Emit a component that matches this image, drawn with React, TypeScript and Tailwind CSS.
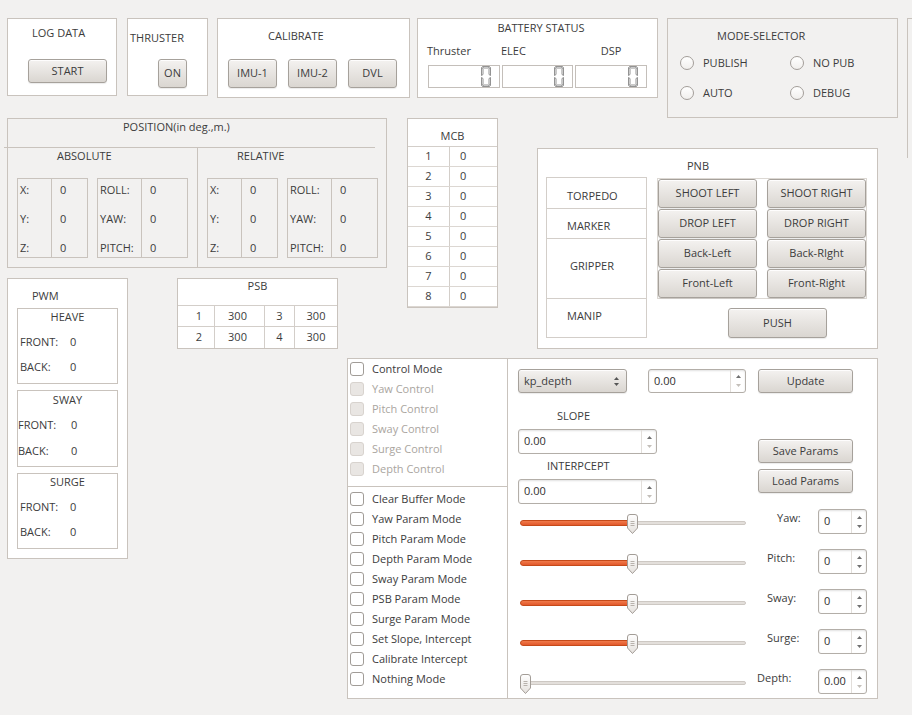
import React from "react";

const Btn = ({ children, className = "" }: { children?: React.ReactNode; className?: string }) => (
  <div
    className={`flex items-center justify-center rounded-[3px] border border-[#a6a19b] bg-linear-to-b from-[#f4f2f0] to-[#dad6d1] shadow-[0_1px_1px_rgba(0,0,0,0.08),inset_0_1px_0_rgba(255,255,255,0.85)] text-[#3c3c3c] shrink-0 ${className}`}
  >
    {children}
  </div>
);

const Up = ({ c = "#5e5e5e" }: { c?: string }) => (
  <svg width="5" height="3" viewBox="0 0 5 3">
    <path d="M0 3 L2.5 0 L5 3 Z" fill={c} />
  </svg>
);
const Down = ({ c = "#5e5e5e" }: { c?: string }) => (
  <svg width="5" height="3" viewBox="0 0 5 3">
    <path d="M0 0 L2.5 3 L5 0 Z" fill={c} />
  </svg>
);

const Spin = ({ value, className = "", downOff = false }: { value: string; className?: string; downOff?: boolean }) => (
  <div
    className={`flex shrink-0 rounded-[3px] border border-[#b3aea8] bg-white shadow-[inset_0_1px_2px_rgba(0,0,0,0.12)] ${className}`}
  >
    <div className="flex flex-1 items-center pl-[5px] text-[#2f2f2f]">{value}</div>
    <div className="flex w-[15px] flex-col items-center justify-center gap-[6px] border-l border-[#e2deda]">
      <Up c="#707070" />
      <Down c={downOff ? "#c4bfba" : "#707070"} />
    </div>
  </div>
);

const Radio = ({ label }: { label: string }) => (
  <div className="flex w-[110px] items-center gap-[9px]">
    <div className="h-[14px] w-[14px] rounded-full border border-[#a39e99] bg-linear-to-b from-white to-[#f1efed]" />
    <span>{label}</span>
  </div>
);

const Check = ({ label, off = false }: { label: string; off?: boolean }) => (
  <div className="flex h-[20px] items-center gap-[8px] pl-[2px]">
    <div
      className={
        off
          ? "h-[14px] w-[14px] rounded-[3px] border border-[#d8d3ce] bg-[#e9e6e3]"
          : "h-[14px] w-[14px] rounded-[3px] border border-[#a19c97] bg-white"
      }
    />
    <span className={off ? "text-[#aaa5a0]" : "text-[#3c3c3c]"}>{label}</span>
  </div>
);

const LcdZero = () => (
  <svg width="10" height="21" viewBox="0 0 10 21" fill="none" stroke="#777" strokeWidth="0.8">
    <path d="M1.5 0.5 H8.5 L7.5 2 H2.5 Z" />
    <path d="M0.5 1.5 V9.5 L2 8.5 V2.5 Z" />
    <path d="M9.5 1.5 V9.5 L8 8.5 V2.5 Z" />
    <path d="M0.5 11.5 V19.5 L2 18.5 V12.5 Z" />
    <path d="M9.5 11.5 V19.5 L8 18.5 V12.5 Z" />
    <path d="M1.5 20.5 H8.5 L7.5 19 H2.5 Z" />
  </svg>
);

const Lcd = ({ className = "" }: { className?: string }) => (
  <div className={`flex h-[23px] items-center justify-end border border-[#c4bfba] bg-white pr-[8px] ${className}`}>
    <LcdZero />
  </div>
);

const Handle = () => (
  <svg width="11" height="20" viewBox="0 0 11 20">
    <defs>
      <linearGradient id="hg" x1="0" y1="0" x2="0" y2="1">
        <stop offset="0" stopColor="#ffffff" />
        <stop offset="1" stopColor="#e4e0dc" />
      </linearGradient>
    </defs>
    <path d="M0.5 3 Q0.5 0.5 3 0.5 H8 Q10.5 0.5 10.5 3 V14 L5.5 19.5 L0.5 14 Z" fill="url(#hg)" stroke="#a39d97" />
    <path d="M3.5 7.5H7.5 M3.5 9.5H7.5 M3.5 11.5H7.5" stroke="#b8b2ac" strokeWidth="1" />
  </svg>
);

const Slider = ({ mid = true }: { mid?: boolean }) => (
  <div className="relative ml-[12px] h-[40px] w-[226px] shrink-0">
    <div className="absolute left-0 right-0 top-[19px] h-[4px] rounded-full border border-[#cdc8c3] bg-[#e3dfdb]" />
    {mid && (
      <div className="absolute left-0 top-[18px] h-[6px] w-[112px] rounded-full border border-[#c54a1a] bg-linear-to-b from-[#f07a4a] to-[#e2582a]" />
    )}
    <div className={mid ? "absolute left-[107px] top-[12px]" : "absolute left-0 top-[12px]"}>
      <Handle />
    </div>
  </div>
);

const PosBox = ({ labels, wLabel, w }: { labels: string[]; wLabel: string; w: string }) => (
  <div className={`flex h-[80px] border border-[#c9c3bd] ${w}`}>
    <div className={`flex flex-col gap-[15px] border-r border-[#c9c3bd] pl-[2px] pt-[4px] ${wLabel}`}>
      {labels.map((l) => (
        <span key={l} className="leading-[14px]">
          {l}
        </span>
      ))}
    </div>
    <div className="flex flex-col gap-[15px] pl-[8px] pt-[4px]">
      {labels.map((l) => (
        <span key={l} className="leading-[14px]">
          0
        </span>
      ))}
    </div>
  </div>
);

const PosSection = ({ title, pl, border }: { title: string; pl: string; border: boolean }) => (
  <div className={border ? "flex flex-1 flex-col border-l border-[#c9c3bd]" : "flex w-[189px] flex-col"}>
    <div className={`pt-[1px] leading-[14px] ${pl}`}>{title}</div>
    <div className="ml-[9px] mt-[15px] flex gap-[9px]">
      <PosBox labels={["X:", "Y:", "Z:"]} wLabel="w-[34px]" w="w-[71px]" />
      <PosBox labels={["ROLL:", "YAW:", "PITCH:"]} wLabel="w-[44px]" w="w-[91px]" />
    </div>
  </div>
);

const PwmBox = ({
  title,
  h,
  pt,
  m1,
  m2,
  lw,
  lpl,
}: {
  title: string;
  h: string;
  pt: string;
  m1: string;
  m2: string;
  lw: string;
  lpl: string;
}) => (
  <div className={`ml-[9px] flex w-[101px] flex-col border border-[#c9c3bd] ${h}`}>
    <div className={`text-center leading-[14px] ${pt}`}>{title}</div>
    <div className={`flex leading-[14px] ${m1}`}>
      <span className={`${lw} ${lpl}`}>FRONT:</span>
      <span>0</span>
    </div>
    <div className={`flex leading-[14px] ${m2}`}>
      <span className={`${lw} ${lpl}`}>BACK:</span>
      <span>0</span>
    </div>
  </div>
);

const SliderRow = ({ label, pl, mid = true, val = "0", downOff = false }: { label: string; pl: string; mid?: boolean; val?: string; downOff?: boolean }) => (
  <div className="flex h-[40px] items-start">
    <Slider mid={mid} />
    <div className={`w-[72px] shrink-0 pt-[9px] leading-[14px] ${pl}`}>{label}</div>
    <Spin value={val} className="mt-[7px] h-[25px] w-[49px]" downOff={downOff} />
  </div>
);

export default function App() {
  const mcb = [1, 2, 3, 4, 5, 6, 7, 8];
  return (
    <div className="h-[715px] w-[912px] overflow-hidden bg-[#f2f1f0] pl-[7px] pt-[18px] font-['Open_Sans',sans-serif] text-[11px] text-[#3c3c3c]">
      {/* Top row */}
      <div className="flex h-[100px] items-start">
        <div className="flex h-[78px] w-[110px] shrink-0 flex-col border border-[#c9c3bd] bg-white">
          <div className="pl-[24px] pt-[7px] leading-[14px]">LOG DATA</div>
          <Btn className="ml-[20px] mt-[19px] h-[24px] w-[79px]">START</Btn>
        </div>
        <div className="ml-[10px] flex h-[78px] w-[81px] shrink-0 flex-col border border-[#c9c3bd] bg-white">
          <div className="pl-[2px] pt-[12px] leading-[14px]">THRUSTER</div>
          <Btn className="ml-[30px] mt-[14px] h-[29px] w-[29px]">ON</Btn>
        </div>
        <div className="ml-[9px] flex h-[80px] w-[193px] shrink-0 flex-col border border-[#c9c3bd] bg-white">
          <div className="pl-[50px] pt-[10px] leading-[14px]">CALIBRATE</div>
          <div className="ml-[10px] mt-[16px] flex gap-[11px]">
            <Btn className="h-[29px] w-[49px]">IMU-1</Btn>
            <Btn className="h-[29px] w-[49px]">IMU-2</Btn>
            <Btn className="h-[29px] w-[49px]">DVL</Btn>
          </div>
        </div>
        <div className="ml-[7px] flex h-[80px] w-[241px] shrink-0 flex-col border border-[#c9c3bd] bg-white">
          <div className="pl-[7px] pt-[2px] text-center leading-[14px]">BATTERY STATUS</div>
          <div className="mt-[9px] flex leading-[14px]">
            <span className="w-[83px] pl-[9px]">Thruster</span>
            <span className="w-[90px]">ELEC</span>
            <span className="w-[40px] text-center">DSP</span>
          </div>
          <div className="ml-[10px] mt-[7px] flex gap-[2px]">
            <Lcd className="w-[72px]" />
            <Lcd className="w-[71px]" />
            <Lcd className="w-[72px]" />
          </div>
        </div>
        <div className="ml-[9px] flex h-[100px] w-[231px] shrink-0 flex-col border border-[#c9c3bd]">
          <div className="pl-[49px] pt-[10px] leading-[14px]">MODE-SELECTOR</div>
          <div className="ml-[12px] mt-[5px] grid grid-cols-[110px_110px] auto-rows-[30px] items-center">
            <Radio label="PUBLISH" />
            <Radio label="NO PUB" />
            <Radio label="AUTO" />
            <Radio label="DEBUG" />
          </div>
        </div>
        <div className="ml-[9px] h-[140px] w-[20px] shrink-0 border-l border-t border-[#c9c3bd]" />
      </div>

      {/* Lower area */}
      <div className="flex items-start">
        {/* Left block */}
        <div className="flex w-[380px] shrink-0 flex-col">
          <div className="flex h-[150px] w-[380px] flex-col border border-[#c9c3bd]">
            <div className="h-[28px] pl-[115px] pt-[1px] leading-[14px]">POSITION(in deg.,m.)</div>
            <div className="-ml-[4px] h-px w-[371px] bg-[#c9c3bd]" />
            <div className="flex flex-1">
              <PosSection title="ABSOLUTE" pl="pl-[49px]" border={false} />
              <PosSection title="RELATIVE" pl="pl-[39px]" border={true} />
            </div>
          </div>
          <div className="mt-[10px] flex items-start">
            <div className="flex h-[281px] w-[121px] shrink-0 flex-col border border-[#c9c3bd] bg-white">
              <div className="pl-[24px] pt-[10px] leading-[14px]">PWM</div>
              <div className="mt-[5px]">
                <PwmBox title="HEAVE" h="h-[76px]" pt="pt-[1px]" m1="mt-[11px]" m2="mt-[11px]" lw="w-[52px]" lpl="pl-[2px]" />
              </div>
              <div className="mt-[6px]">
                <PwmBox title="SWAY" h="h-[77px]" pt="pt-[2px]" m1="mt-[11px]" m2="mt-[12px]" lw="w-[53px]" lpl="pl-0" />
              </div>
              <div className="mt-[6px]">
                <PwmBox title="SURGE" h="h-[76px]" pt="pt-[1px]" m1="mt-[11px]" m2="mt-[11px]" lw="w-[52px]" lpl="pl-[2px]" />
              </div>
            </div>
            <div className="ml-[49px] flex h-[71px] w-[161px] shrink-0 flex-col border border-[#c9c3bd] bg-white">
              <div className="h-[27px] border-b border-[#d3cec9] text-center leading-[14px]">PSB</div>
              {[
                ["1", "300", "3", "300"],
                ["2", "300", "4", "300"],
              ].map((r, i) => (
                <div
                  key={i}
                  className={
                    i === 0
                      ? "grid h-[21px] grid-cols-[37px_50px_30px_42px] border-b border-[#d3cec9]"
                      : "grid h-[21px] grid-cols-[37px_50px_30px_42px]"
                  }
                >
                  <div className="flex items-center justify-center border-r border-[#d3cec9] pl-[6px]">{r[0]}</div>
                  <div className="flex items-center justify-center border-r border-[#d3cec9] pr-[4px]">{r[1]}</div>
                  <div className="flex items-center justify-center border-r border-[#d3cec9]">{r[2]}</div>
                  <div className="flex items-center justify-center">{r[3]}</div>
                </div>
              ))}
            </div>
          </div>
        </div>

        {/* Right block */}
        <div className="ml-[20px] flex flex-col">
          <div className="flex items-start">
            <div className="flex h-[190px] w-[91px] shrink-0 flex-col border border-[#c9c3bd] bg-white">
              <div className="h-[28px] border-b border-[#d3cec9] pt-[10px] text-center leading-[14px]">MCB</div>
              {mcb.map((n) => (
                <div key={n} className="flex h-[20px] border-b border-[#dcd7d2]">
                  <div className="flex w-[42px] items-center justify-center border-r border-[#d3cec9]">{n}</div>
                  <div className="flex items-center pl-[10px]">0</div>
                </div>
              ))}
            </div>
            <div className="ml-[39px] mt-[30px] flex h-[201px] w-[341px] shrink-0 flex-col border border-[#c9c3bd] bg-white">
              <div className="pl-[149px] pt-[10px] leading-[14px]">PNB</div>
              <div className="mt-[4px] flex items-start">
                <div className="ml-[8px] flex w-[101px] shrink-0 flex-col border-b border-l border-r border-[#d3cec9]">
                  <div className="h-[31px] border-t border-[#d3cec9] pl-[20px] pt-[11px] leading-[14px]">TORPEDO</div>
                  <div className="h-[30px] border-t border-[#d3cec9] pl-[20px] pt-[10px] leading-[14px]">MARKER</div>
                  <div className="h-[60px] border-t border-[#d3cec9] pl-[23px] pt-[20px] leading-[14px]">GRIPPER</div>
                  <div className="h-[39px] border-t border-[#d3cec9] pl-[20px] pt-[10px] leading-[14px]">MANIP</div>
                </div>
                <div className="ml-[10px] flex flex-col">
                  <div className="mt-[1px] grid h-[121px] w-[210px] grid-cols-[99px_99px] gap-x-[10px] gap-y-[1px] border border-[#dcd8d3]">
                    {["SHOOT LEFT", "SHOOT RIGHT", "DROP LEFT", "DROP RIGHT", "Back-Left", "Back-RIght", "Front-Left", "Front-Right"].map(
                      (t) => (
                        <Btn key={t} className="h-[29px] w-[99px]">
                          {t}
                        </Btn>
                      )
                    )}
                  </div>
                  <Btn className="ml-[71px] mt-[9px] h-[30px] w-[99px]">PUSH</Btn>
                </div>
              </div>
            </div>
          </div>

          {/* Control panel */}
          <div className="-ml-[60px] mt-[9px] flex h-[341px] w-[531px] border border-[#c9c3bd] bg-white">
            <div className="flex w-[160px] shrink-0 flex-col border-r border-[#c9c3bd]">
              <div className="h-[128px] border-b border-[#c9c3bd]">
                <Check label="Control Mode" />
                <Check label="Yaw Control" off />
                <Check label="Pitch Control" off />
                <Check label="Sway Control" off />
                <Check label="Surge Control" off />
                <Check label="Depth Control" off />
              </div>
              <div className="pt-[2px]">
                {[
                  "Clear Buffer Mode",
                  "Yaw Param Mode",
                  "Pitch Param Mode",
                  "Depth Param Mode",
                  "Sway Param Mode",
                  "PSB Param Mode",
                  "Surge Param Mode",
                  "Set Slope, Intercept",
                  "Calibrate Intercept",
                  "Nothing Mode",
                ].map((t) => (
                  <Check key={t} label={t} />
                ))}
              </div>
            </div>
            <div className="flex flex-1 flex-col">
              <div className="mt-[10px] flex items-start">
                <Btn className="ml-[10px] h-[24px] w-[109px] !justify-between pl-[5px] pr-[7px]">
                  <span>kp_depth</span>
                  <span className="flex flex-col gap-[3px]">
                    <Up c="#555" />
                    <Down c="#555" />
                  </span>
                </Btn>
                <Spin value="0.00" className="ml-[21px] h-[24px] w-[98px]" downOff />
                <Btn className="ml-[12px] h-[24px] w-[95px]">Update</Btn>
              </div>
              <div className="flex items-start">
                <div className="flex w-[149px] shrink-0 flex-col">
                  <div className="mt-[16px] pl-[49px] leading-[14px]">SLOPE</div>
                  <Spin value="0.00" className="ml-[10px] mt-[6px] h-[25px] w-[139px]" downOff />
                  <div className="mt-[5px] pl-[39px] leading-[14px]">INTERPCEPT</div>
                  <Spin value="0.00" className="ml-[10px] mt-[6px] h-[25px] w-[139px]" downOff />
                </div>
                <div className="ml-[101px] flex flex-col">
                  <Btn className="mt-[46px] h-[24px] w-[95px]">Save Params</Btn>
                  <Btn className="mt-[6px] h-[24px] w-[95px]">Load Params</Btn>
                </div>
              </div>
              <div className="-mt-[2px] flex flex-col">
                <SliderRow label="Yaw:" pl="pl-[31px]" />
                <SliderRow label="Pitch:" pl="pl-[21px]" />
                <SliderRow label="Sway:" pl="pl-[21px]" />
                <SliderRow label="Surge:" pl="pl-[21px]" />
                <SliderRow label="Depth:" pl="pl-[11px]" mid={false} val="0.00" downOff />
              </div>
            </div>
          </div>
        </div>
      </div>
    </div>
  );
}
